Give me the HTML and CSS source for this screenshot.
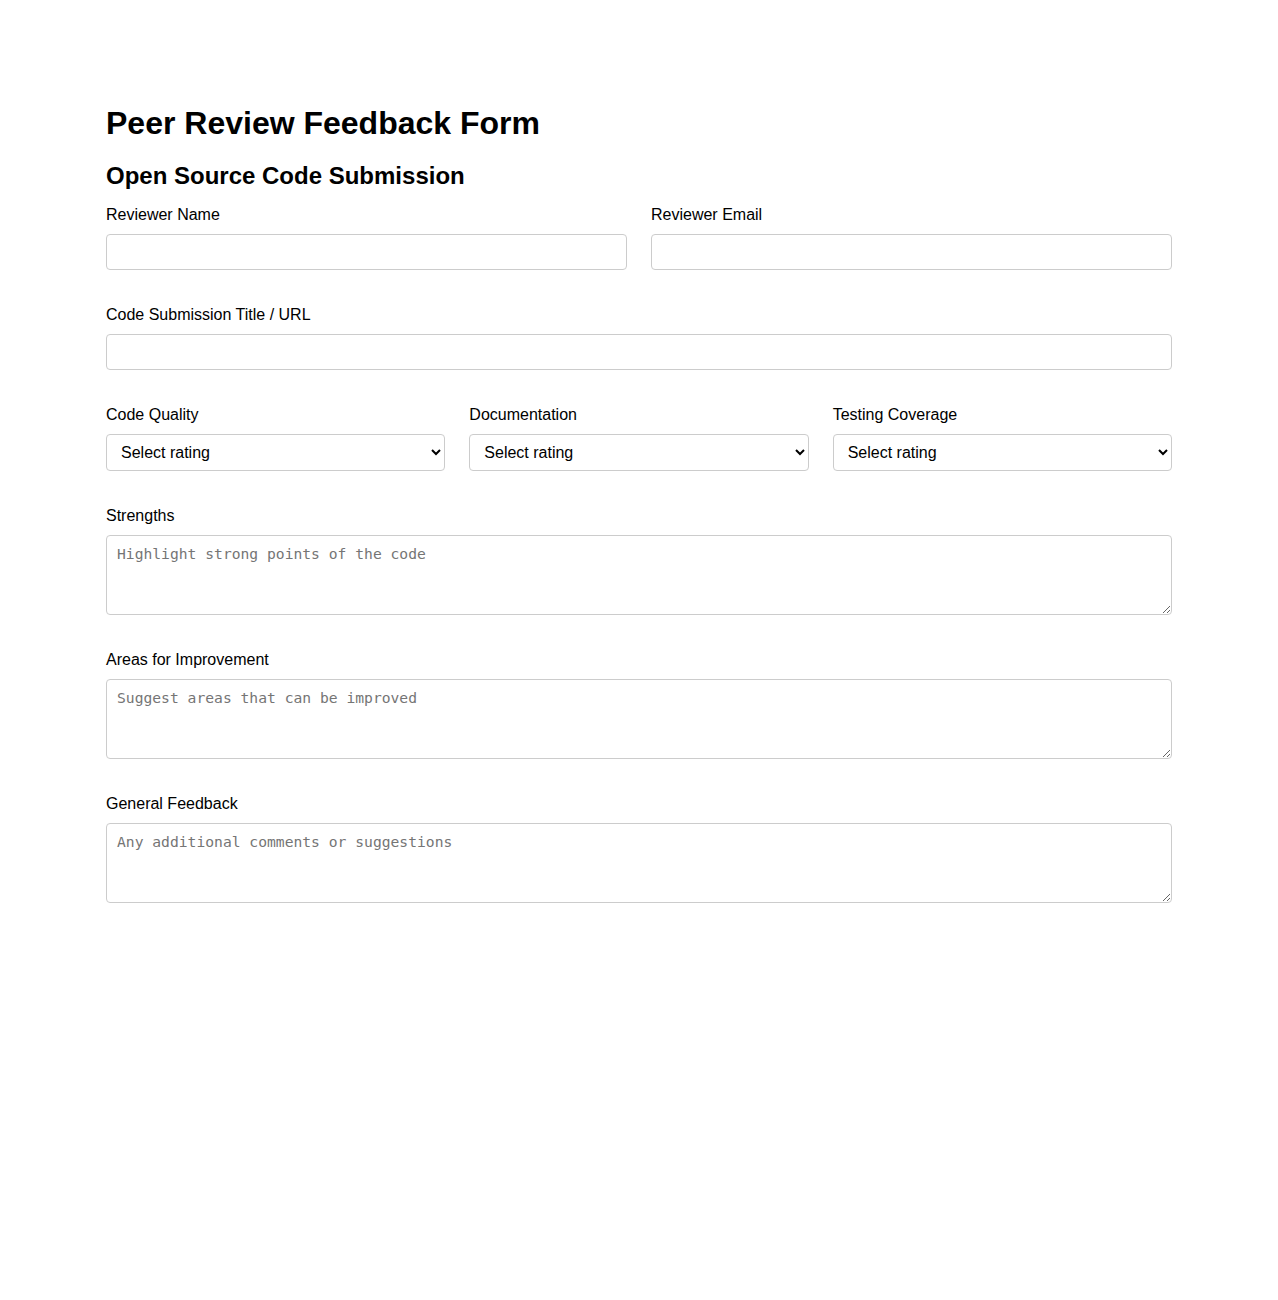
FILE: index.html
```html
<!DOCTYPE html>
<html lang="en">
<head>
<meta charset="utf-8">
<title>Peer Review Feedback Form</title>
<link rel="stylesheet" href="styles.css">
</head>
<body>
<div class="container">
  <h1 class="title">Peer Review Feedback Form</h1>
  <h2 class="subtitle">Open Source Code Submission</h2>
  <form class="form">
    <div class="row two">
      <div class="field">
        <label class="label" for="rname">Reviewer Name</label>
        <input class="control" id="rname" type="text">
      </div>
      <div class="field">
        <label class="label" for="remail">Reviewer Email</label>
        <input class="control" id="remail" type="email">
      </div>
    </div>
    <div class="field">
      <label class="label" for="title">Code Submission Title / URL</label>
      <input class="control" id="title" type="text">
    </div>
    <div class="row three">
      <div class="field">
        <label class="label" for="q">Code Quality</label>
        <select class="control select" id="q"><option>Select rating</option></select>
      </div>
      <div class="field">
        <label class="label" for="d">Documentation</label>
        <select class="control select" id="d"><option>Select rating</option></select>
      </div>
      <div class="field">
        <label class="label" for="t">Testing Coverage</label>
        <select class="control select" id="t"><option>Select rating</option></select>
      </div>
    </div>
    <div class="field">
      <label class="label" for="s">Strengths</label>
      <textarea class="control area" id="s" placeholder="Highlight strong points of the code"></textarea>
    </div>
    <div class="field">
      <label class="label" for="a">Areas for Improvement</label>
      <textarea class="control area" id="a" placeholder="Suggest areas that can be improved"></textarea>
    </div>
    <div class="field">
      <label class="label" for="g">General Feedback</label>
      <textarea class="control area" id="g" placeholder="Any additional comments or suggestions"></textarea>
    </div>
  </form>
</div>
</body>
</html>
```
FILE: styles.css
```css
* { box-sizing: border-box; }
html, body { margin: 0; padding: 0; background: #fff; }
body {
  font-family: "Liberation Sans", Arial, sans-serif;
  color: #000;
}
.container {
  width: 1066px;
  margin: 0 auto;
  padding-top: 105px;
}
.title {
  font-size: 32px;
  font-weight: bold;
  line-height: 37px;
  margin: 0 0 20px 0;
}
.subtitle {
  font-size: 24px;
  font-weight: bold;
  line-height: 28px;
  margin: 0 0 12px 0;
}
.form { display: flex; flex-direction: column; gap: 32px; }
.row { display: grid; gap: 24px; }
.row.two { grid-template-columns: 1fr 1fr; }
.row.three { grid-template-columns: 1fr 1fr 1fr; }
.field { display: flex; flex-direction: column; min-width: 0; }
.label {
  font-size: 16px;
  line-height: 24px;
  padding-top: 1px;
  margin-bottom: 7px;
}
.control {
  width: 100%;
  height: 36px;
  border: 1px solid #ccc;
  border-radius: 4px;
  padding: 10px;
  font-family: "Liberation Sans", Arial, sans-serif;
  font-size: 16px;
  background: #fff;
  color: #000;
}
.select { height: 37px; padding: 0 10px; }
.area {
  height: 80px;
  padding-top: 9px;
  font-family: "DejaVu Sans Mono", monospace;
  font-size: 14.67px;
  resize: vertical;
}
.area::placeholder { color: #757575; }
```
